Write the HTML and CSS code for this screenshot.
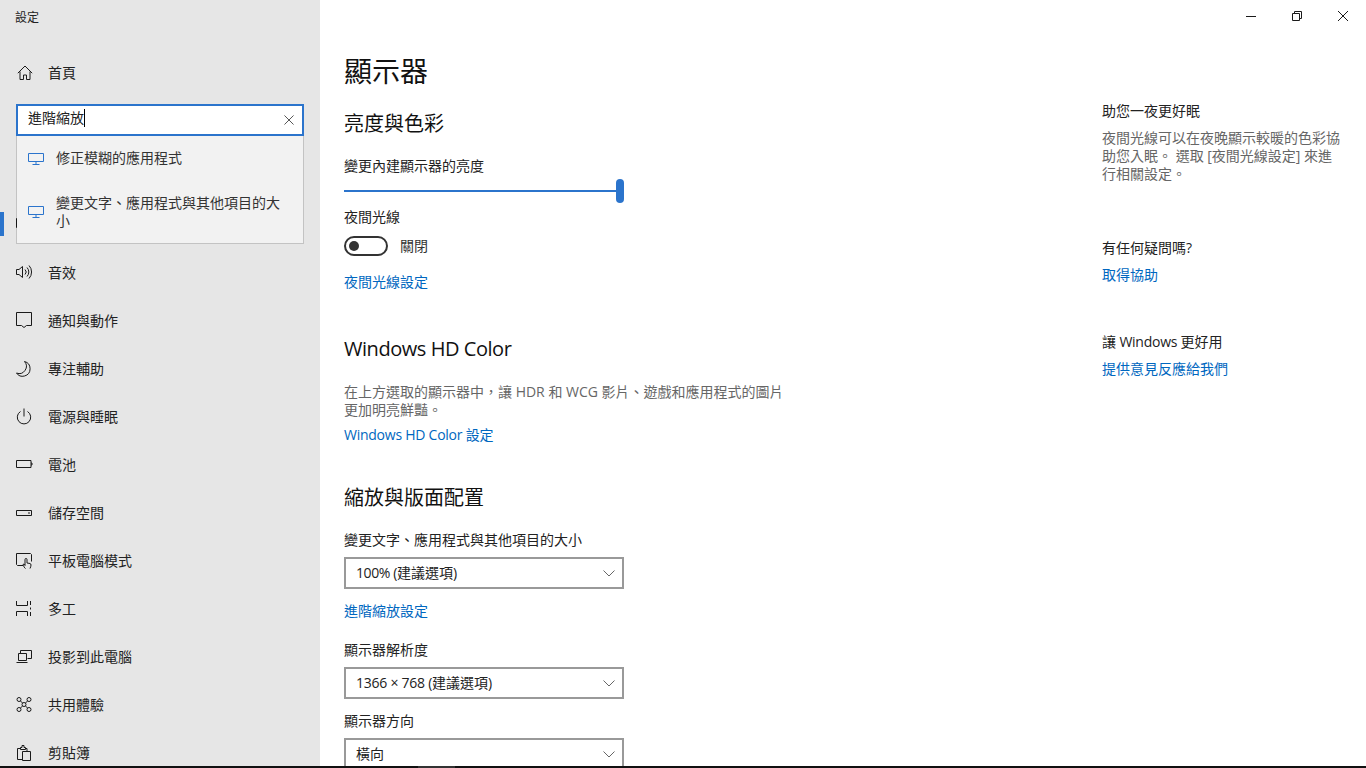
FILE: index.html
```html
<!DOCTYPE html>
<html lang="zh-Hant">
<head>
<meta charset="utf-8">
<title>設定</title>
<link rel="stylesheet" href="styles.css">
</head>
<body>
<div class="app">
  <aside class="sidebar">
    <div class="app-title">設定</div>
    <div class="home-row">
      <svg class="icon" viewBox="0 0 16 16"><path d="M.8 8.200 8 1l7.200 7.200M3 6.500v8h3.500V10h3v4.500h3.500v-8"/></svg>
      <span>首頁</span>
    </div>
    <div class="search">
      <div class="search-box">
        <span class="search-text">進階縮放</span><span class="caret"></span>
        <svg class="search-clear" viewBox="0 0 11 11"><path d="M.5.500l10 10M10.500.500l-10 10"/></svg>
      </div>
      <div class="suggest">
        <div class="suggest-item">
          <svg class="monitor" viewBox="0 0 16 12"><path d="M.5.500h15v8H.5zM8 8.500v2.500M4.500 11.500h7"/></svg>
          <span>修正模糊的應用程式</span>
        </div>
        <div class="suggest-item suggest-item-wide">
          <svg class="monitor" viewBox="0 0 16 12"><path d="M.5.500h15v8H.5zM8 8.500v2.500M4.500 11.500h7"/></svg>
          <span>變更文字、應用程式與其他項目的大小</span>
        </div>
      </div>
    </div>
    <nav class="nav">
      <div class="nav-row nav-row-active">
        <svg class="icon" viewBox="0 0 16 16"><path d="M.5 1.500h15v9H.5zM8 10.500v3M4 14.500h8"/></svg>
      </div>
      <div class="nav-row">
        <svg class="icon" viewBox="0 0 16 16"><path d="M.5 4.500h2.500l3.500-3v11l-3.500-3H.5zM9 4.500a3.500 3.500 0 0 1 0 5M11 2.500a6.500 6.500 0 0 1 0 9M13 .5a9.500 9.500 0 0 1 0 13"/></svg>
        <span>音效</span>
      </div>
      <div class="nav-row">
        <svg class="icon" viewBox="0 0 16 16"><path d="M.5-.5h15v13H10.500l-2.500 2-2.500-2H.5z"/></svg>
        <span>通知與動作</span>
      </div>
      <div class="nav-row">
        <svg class="icon" viewBox="0 0 16 16"><path d="M8.500.5a7.200 7.200 0 0 1-8 11.500 7.300 7.300 0 0 0 8 3 7.500 7.500 0 0 0 0-14.500z"/></svg>
        <span>專注輔助</span>
      </div>
      <div class="nav-row">
        <svg class="icon" viewBox="0 0 16 16"><path d="M4.500 2.500a6.700 6.700 0 1 0 7 0M8-.5v8"/></svg>
        <span>電源與睡眠</span>
      </div>
      <div class="nav-row">
        <svg class="icon" viewBox="0 0 16 16"><path d="M.5 3.500h14.500v7H.5zM15 6h1v2h-1"/></svg>
        <span>電池</span>
      </div>
      <div class="nav-row">
        <svg class="icon" viewBox="0 0 16 16"><path d="M.5 5.500h15v5H.5zM12 8h2"/></svg>
        <span>儲存空間</span>
      </div>
      <div class="nav-row">
        <svg class="icon" viewBox="0 0 16 16"><path d="M7 12.500H1.500l-1-1v-11h14l1 1v7M9.500 15.500c-1-.5-2-2.500-2.500-4l1-.5 1 1.500V6.500a1 1 0 0 1 2 0v3.500l3 .5c.7.200 1 .6 1 1.500 0 1-.5 2.500-1 3.500"/></svg>
        <span>平板電腦模式</span>
      </div>
      <div class="nav-row">
        <svg class="icon" viewBox="0 0 16 16"><path d="M.5 0v4.500h11V0M.5 15v-4.500h11V15M14.500 0v4M14.500 6.500v2M14.500 11v4"/></svg>
        <span>多工</span>
      </div>
      <div class="nav-row">
        <svg class="icon" viewBox="0 0 16 16"><path d="M4.500 4.500v-3h11v8h-4M2.500 4.500h8v7h-8zM.5 13.500h11"/></svg>
        <span>投影到此電腦</span>
      </div>
      <div class="nav-row">
        <svg class="icon" viewBox="0 0 16 16"><circle cx="8" cy="7.500" r="2"/><circle cx="3" cy="2.500" r="2"/><circle cx="13" cy="2.500" r="2"/><circle cx="3" cy="12.500" r="2"/><circle cx="13" cy="12.500" r="2"/><path d="M4.500 4 6.500 6M11.500 4 9.500 6M4.500 11 6.500 9M11.500 11 9.500 9"/></svg>
        <span>共用體驗</span>
      </div>
      <div class="nav-row">
        <svg class="icon" viewBox="0 0 16 16"><path d="M6.500 14.500H1.500V3.500h3M9.500 3.500h1.500v3M4.500 4.500v-2h1.500V.5h2V2.500h1.500v2zM6.500 6.500h8v9h-8z"/></svg>
        <span>剪貼簿</span>
      </div>
    </nav>
    <span class="active-bar"></span>
  </aside>

  <main class="main">
    <div class="titlebar">
      <div class="win-btn">
        <svg class="win-icon" viewBox="0 0 10 10"><path d="M0 5.500h10"/></svg>
      </div>
      <div class="win-btn">
        <svg class="win-icon" viewBox="0 0 10 10"><path d="M.5 2.500h7v7h-7zM2.500 2.500v-2h7v7h-2"/></svg>
      </div>
      <div class="win-btn">
        <svg class="win-icon" viewBox="0 0 10 10"><path d="M0 0l10 10M10 0 0 10"/></svg>
      </div>
    </div>
    <div class="content">
      <section class="col">
        <h1 class="page-title">顯示器</h1>
        <h2 class="section section-first">亮度與色彩</h2>
        <div class="label label-bright">變更內建顯示器的亮度</div>
        <div class="slider"><span class="slider-track"></span><span class="slider-thumb"></span></div>
        <div class="label label-night">夜間光線</div>
        <div class="toggle-row">
          <span class="toggle"><span class="toggle-knob"></span></span>
          <span>關閉</span>
        </div>
        <a class="link link-night">夜間光線設定</a>
        <h2 class="section section-hd"><span class="latin-wide">Windows HD Color</span></h2>
        <p class="note note-hd">在上方選取的顯示器中，讓 HDR 和 WCG 影片、遊戲和應用程式的圖片更加明亮鮮豔。</p>
        <a class="link link-hd"><span class="latin">Windows HD Color </span>設定</a>
        <h2 class="section section-scale">縮放與版面配置</h2>
        <div class="label label-size">變更文字、應用程式與其他項目的大小</div>
        <div class="select select-size"><span><span class="latin-tight">100% (</span>建議選項)</span><svg class="chevron" viewBox="0 0 12 7"><path d="M.5.500 6 6l5.500-5.500"/></svg></div>
        <a class="link link-scale">進階縮放設定</a>
        <div class="label label-res">顯示器解析度</div>
        <div class="select select-res"><span><span class="latin">1366 × 768 (</span>建議選項)</span><svg class="chevron" viewBox="0 0 12 7"><path d="M.5.500 6 6l5.500-5.500"/></svg></div>
        <div class="label label-orient">顯示器方向</div>
        <div class="select select-res"><span>橫向</span><svg class="chevron" viewBox="0 0 12 7"><path d="M.5.500 6 6l5.500-5.500"/></svg></div>
      </section>
      <aside class="help">
        <div class="help-title">助您一夜更好眠</div>
        <p class="note note-help">夜間光線可以在夜晚顯示較暖的色彩協助您入眠。 選取 [夜間光線設定] 來進行相關設定。</p>
        <div class="help-title help-q">有任何疑問嗎?</div>
        <a class="link help-link">取得協助</a>
        <div class="help-title help-fb">讓<span class="latin"> Windows </span>更好用</div>
        <a class="link help-link">提供意見反應給我們</a>
      </aside>
    </div>
  </main>
</div>
<div class="screen-edge"><span class="edge-hover"></span></div>
</body>
</html>
```

FILE: styles.css
```css
* { box-sizing: border-box; }
html, body { margin: 0; height: 100%; overflow: hidden; background: #fff; }
body {
  font-family: "Open Sans", "Noto Sans CJK TC", sans-serif;
  font-size: 14px;
  line-height: 20px;
  color: #222;
  display: flex;
  flex-direction: column;
}
.app { display: flex; height: 766px; overflow: hidden; }
.latin { letter-spacing: -.25px; }
.latin-wide { letter-spacing: -.45px; }
.latin-tight { letter-spacing: -.4px; }

.sidebar {
  position: relative;
  width: 320px;
  flex: none;
  background: #e6e6e6;
  padding-top: 7px;
}
.app-title { font-size: 12px; line-height: 20px; padding-left: 15px; padding-top: 1px; height: 20px; }
.home-row {
  display: flex;
  align-items: center;
  gap: 15px;
  height: 48px;
  margin-top: 22px;
  padding-left: 17px;
}
.icon {
  width: 16px;
  height: 16px;
  flex: none;
  fill: none;
  stroke: #1a1a1a;
  stroke-width: 1;
  overflow: visible;
}
.search { position: relative; margin: 7px 16px 0; height: 32px; }
.search-box {
  display: flex;
  align-items: center;
  height: 32px;
  border: 2px solid #2b74cc;
  background: #fff;
  padding: 0 0 4px 10px;
  color: #222;
}
.caret { width: 1px; height: 18px; background: #000; }
.search-clear {
  width: 10px;
  height: 10px;
  margin: 4px 8px 0 auto;
  fill: none;
  stroke: #444;
}
.suggest {
  position: absolute;
  z-index: 2;
  top: 32px;
  left: 0;
  width: 288px;
  height: 108px;
  background: #f2f2f2;
  background-clip: padding-box;
  border: 1px solid rgba(0, 0, 0, .15);
  border-top: 0;
  color: #333;
  padding: 13px 11px 0;
}
.suggest-item { display: flex; align-items: flex-start; gap: 12px; line-height: 18px; }
.suggest-item-wide { align-items: center; margin-top: 27px; }
.monitor { width: 16px; height: 12px; flex: none; fill: none; stroke: #2b74cc; margin-top: 4px; overflow: visible; }
.suggest-item-wide .monitor { margin-top: 0; }

.nav { margin-top: 65px; }
.nav-row {
  display: flex;
  align-items: center;
  gap: 16px;
  height: 48px;
  padding-left: 16px;
}
.active-bar {
  position: absolute;
  left: 0;
  top: 212px;
  width: 4px;
  height: 24px;
  background: #2b74cc;
}

.main { flex: 1; display: flex; flex-direction: column; min-width: 0; }
.titlebar { display: flex; justify-content: flex-end; height: 32px; flex: none; }
.win-btn { width: 46px; display: flex; align-items: center; justify-content: center; }
.win-icon { width: 10px; height: 10px; fill: none; stroke: #1a1a1a; }
.content { display: flex; padding-left: 24px; }
.col { width: 758px; flex: none; }
.help { width: 240px; flex: none; padding-top: 69px; }

.page-title { font-size: 28px; line-height: 40px; font-weight: 400; margin: 19px 0 0; color: #111; }
.section { font-size: 20px; line-height: 28px; font-weight: 400; margin: 0; color: #111; }
.section-first { margin-top: 19px; }
.section-hd { margin-top: 43px; }
.section-scale { margin-top: 39px; }
.label { line-height: 20px; }
.label-bright { margin-top: 18px; }
.label-night { margin-top: 4px; }
.label-size { margin-top: 18px; }
.label-res { margin-top: 19px; }
.label-orient { margin-top: 12px; }
.slider { position: relative; width: 280px; height: 24px; margin-top: 3px; display: flex; align-items: center; }
.slider-track { width: 100%; height: 2px; background: #2b74cc; }
.slider-thumb { position: absolute; right: 0; top: 0; width: 8px; height: 24px; border-radius: 4px; background: #2b74cc; }
.toggle-row { display: flex; align-items: center; gap: 12px; margin-top: 9px; height: 20px; color: #333; }
.toggle {
  display: flex;
  align-items: center;
  width: 44px;
  height: 20px;
  border: 2px solid #333;
  border-radius: 10px;
  padding-left: 3px;
}
.toggle-knob { width: 10px; height: 10px; border-radius: 50%; background: #333; }
.link { display: block; color: #0067c0; line-height: 20px; }
.link-night { margin-top: 16px; }
.link-hd { margin-top: 6px; }
.link-scale { margin-top: 12px; }
.note { margin: 0; color: #666; line-height: 18px; }
.note-hd { margin-top: 20px; width: 445px; }
.select {
  display: flex;
  align-items: center;
  justify-content: space-between;
  width: 280px;
  height: 32px;
  border: 2px solid #999;
  padding: 0 7px 0 10px;
  color: #222;
}
.select-size { margin-top: 7px; }
.select-res { margin-top: 7px; }
.chevron { width: 12px; height: 7px; fill: none; stroke: #666; }
.help-title { line-height: 20px; color: #222; }
.note-help { margin-top: 8px; }
.help-q { margin-top: 55px; }
.help-fb { margin-top: 47px; }
.help-link { margin-top: 7px; }

.screen-edge { position: relative; height: 2px; flex: none; background: #111; }
.edge-hover { position: absolute; left: 418px; width: 37px; top: 0; height: 2px; background: #333; }
```
